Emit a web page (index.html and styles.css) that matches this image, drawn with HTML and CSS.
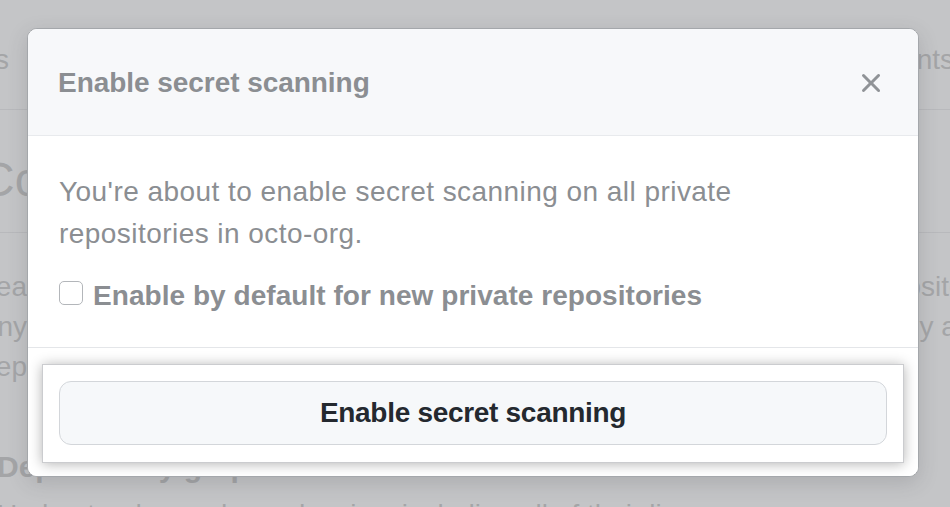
FILE: index.html
```html
<!DOCTYPE html>
<html lang="en">
<head>
<meta charset="utf-8">
<title>Enable secret scanning</title>
<link rel="stylesheet" href="styles.css">
</head>
<body>
  <div class="page">
    <nav class="tabs">
      <div class="edge-l w-tab"><span>Teams</span></div>
      <div class="edge-l w-tab-r"><span>Payments</span></div>
    </nav>
    <h1 class="heading">Code security and analysis</h1>
    <div class="para">
      <div class="row">
        <div class="edge-l w-line"><span>Security and analysis features help keep your repositories secure and updated. Rea</span></div>
        <div class="edge-r w-line-r"><span>repositories and</span></div>
      </div>
      <div class="row">
        <div class="edge-l w-line"><span>features, you're granting us permission to perform read-only analysis on any</span></div>
        <div class="edge-r w-line-r"><span>many analysis</span></div>
      </div>
      <div class="row">
        <div class="edge-l w-line"><span>of your organization's rep</span></div>
        <div class="edge-r w-line-r"></div>
      </div>
    </div>
    <h2 class="dep">Dependency graph</h2>
    <p class="dep-text">Understand your dependencies, including all of their licenses.</p>
  </div>

  <div class="modal" role="dialog" aria-labelledby="modal-title">
    <div class="modal-header">
      <h3 class="modal-title" id="modal-title">Enable secret scanning</h3>
      <button class="close" type="button" aria-label="Close">
        <svg viewBox="0 0 16 16" width="32" height="32" aria-hidden="true"><path fill="currentColor" d="M3.72 3.72a.75.75 0 0 1 1.06 0L8 6.94l3.22-3.22a.749.749 0 0 1 1.275.326.749.749 0 0 1-.215.734L9.06 8l3.22 3.22a.749.749 0 0 1-.326 1.275.749.749 0 0 1-.734-.215L8 9.06l-3.22 3.22a.751.751 0 0 1-1.042-.018.751.751 0 0 1-.018-1.042L6.94 8 3.72 4.78a.75.75 0 0 1 0-1.06Z"/></svg>
      </button>
    </div>
    <div class="modal-body">
      <p class="modal-text">You're about to enable secret scanning on all private<br>repositories in octo-org.</p>
      <label class="check-row">
        <span class="checkbox"></span>
        <span class="check-label">Enable by default for new private repositories</span>
      </label>
    </div>
    <div class="modal-footer">
      <div class="highlight">
        <button class="btn" type="button">Enable secret scanning</button>
      </div>
    </div>
  </div>
</body>
</html>
```
FILE: styles.css
```css
html, body {
  margin: 0;
  padding: 0;
}

body {
  width: 950px;
  height: 507px;
  overflow: hidden;
  position: relative;
  background: #c4c5c7;
  font-family: "Liberation Sans", Arial, sans-serif;
}

/* ---------- dimmed page underneath ---------- */
.page {
  color: #a4a5a7;
  font-size: 28px;
}

.tabs {
  display: flex;
  justify-content: space-between;
  margin-right: -4px;
  padding: 40px 0 29px;
  line-height: 40px;
  border-bottom: 1px solid #b8b9bc;
}

.edge-l {
  flex: none;
  display: flex;
  justify-content: flex-end;
  overflow: hidden;
  white-space: nowrap;
}

.edge-r {
  flex: none;
  display: flex;
  overflow: hidden;
  white-space: nowrap;
}

.edge-l > span,
.edge-r > span {
  flex: none;
}

.w-tab { width: 9px; }
.w-tab-r { width: 100px; }
.w-line { width: 27px; }
.w-line-r { width: 85px; }

.heading {
  margin: 40px 0 0 -20px;
  padding-bottom: 22px;
  font-size: 48px;
  font-weight: normal;
  line-height: 60px;
  border-bottom: 1px solid #b8b9bc;
}

.para {
  margin-top: 34px;
  line-height: 40px;
}

.row {
  display: flex;
  justify-content: space-between;
  height: 40px;
}

.dep {
  margin: 60px 0 0 -3px;
  font-size: 30px;
  font-weight: bold;
  line-height: 40px;
}

.dep-text {
  margin: 8px 0 0 -3px;
  line-height: 40px;
}

/* ---------- modal ---------- */
.modal {
  position: absolute;
  left: 27px;
  top: 28px;
  width: 892px;
  height: 449px;
  box-sizing: border-box;
  display: flex;
  flex-direction: column;
  background: #fff;
  border: 1px solid #a4a7ab;
  border-radius: 10px;
  overflow: hidden;
  box-shadow: 0 6px 20px rgba(60, 62, 66, 0.18);
}

.modal-header {
  display: flex;
  align-items: center;
  justify-content: space-between;
  padding: 33px 31px 31px 30px;
  background: #f7f8fa;
  border-bottom: 1px solid #e8eaed;
}

.modal-title {
  margin: 0;
  font-size: 28px;
  font-weight: bold;
  line-height: 42px;
  letter-spacing: -0.05px;
  color: #8b8e92;
}

.close {
  width: 32px;
  height: 32px;
  padding: 0;
  border: 0;
  background: none;
  color: #909397;
  display: flex;
}

.modal-body {
  padding: 35px 31px 30px;
  color: #8b8e92;
}

.modal-text {
  margin: 0 0 20px;
  font-size: 28px;
  line-height: 42px;
  letter-spacing: 0.45px;
}

.check-row {
  display: flex;
  align-items: flex-start;
  font-size: 28px;
  line-height: 42px;
}

.checkbox {
  flex: none;
  width: 24px;
  height: 24px;
  box-sizing: border-box;
  margin: 6px 10px 0 0;
  border: 1px solid #b3b6ba;
  border-radius: 5px;
  background: #fff;
}

.check-label {
  font-weight: bold;
  letter-spacing: 0.05px;
}

.modal-footer {
  flex: 1;
  padding: 16px 14px 0;
  border-top: 1px solid #e4e6e9;
  background: #fff;
}

.highlight {
  padding: 16px 16px 17px;
  border: 1px solid #cbcccf;
  background: #fff;
  box-shadow: 0 1px 12px rgba(0, 0, 0, 0.3);
}

.btn {
  display: block;
  width: 100%;
  height: 64px;
  box-sizing: border-box;
  padding: 0;
  background: #f6f8fa;
  border: 1px solid #d3d6da;
  border-radius: 12px;
  font-family: "Liberation Sans", Arial, sans-serif;
  font-size: 28px;
  font-weight: bold;
  letter-spacing: -0.3px;
  color: #24292f;
}
```
